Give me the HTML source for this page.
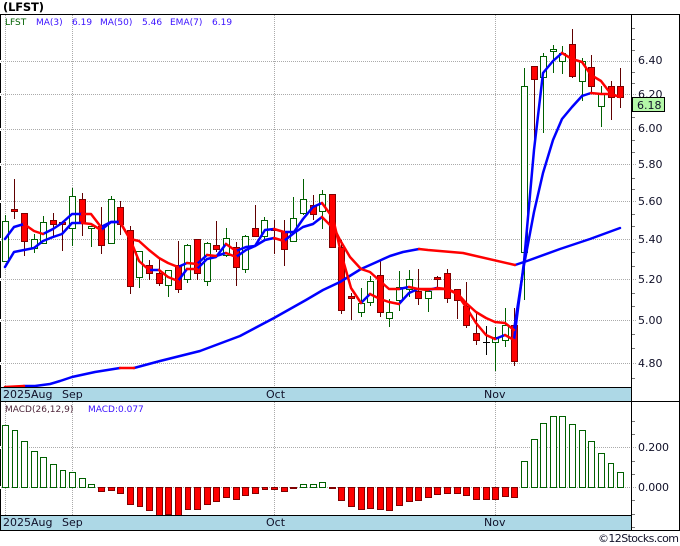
<!DOCTYPE html>
<html><head><meta charset="utf-8"><style>
html,body{margin:0;padding:0;background:#fff;width:680px;height:546px;overflow:hidden}
svg{display:block}
text{font-family:"DejaVu Sans",sans-serif;font-size:11px;fill:#101028}
.l{font-size:9px;fill:#3a10ff}
</style></head><body>
<svg width="680" height="546" viewBox="0 0 680 546" xmlns="http://www.w3.org/2000/svg">
<rect width="680" height="546" fill="#fff"/>
<g shape-rendering="crispEdges" fill="none">
<path stroke="#aaa" stroke-dasharray="1 1" d="M1 61.5H637M1 94.5H637M1 129.5H637M1 164.5H637M1 201.5H637M1 239.5H637M1 279.5H637M1 320.5H637M1 363.5H637M1 447.5H637M1 487.5H637M5.5 15V387M72.5 15V387M274.5 15V387M495.5 15V387M5.5 402V515M72.5 402V515M274.5 402V515M495.5 402V515"/>
<path stroke="#777" d="M632 28.5h3M632 39.5h3M632 50.5h3M632 72.5h3M632 83.5h3M632 105.5h3M632 117.5h3M632 140.5h3M632 152.5h3M632 178.5h3M632 189.5h3M632 214.5h3M632 226.5h3M632 252.5h3M632 266.5h3M632 293.5h3M632 306.5h3M632 334.5h3M632 348.5h3M632 378.5h3M632 421.5h3M632 434.5h3M632 461.5h3M632 474.5h3M632 500.5h3M632 514.5h3M632 527.5h3"/>
<!-- wicks -->
<path stroke="#006000" d="M5.5 215V261M34.5 234V253M43.5 216V244M72.5 188V246M91.5 226V247M111.5 196V243M139.5 251V288M168.5 270V297M187.5 244V283M207.5 242V286M226.5 228V257M245.5 235V273M264.5 217V239M293.5 197V241M303.5 179V215M322.5 190V229M361.5 288V317M370.5 276V306M389.5 299V327M399.5 271V311M409.5 270V297M428.5 288V312M495.5 327V371M505.5 308V347M524.5 68V300M543.5 53V133M553.5 45V73M562.5 46V74M582.5 58V101M601.5 86V127"/>
<path stroke="#600000" d="M14.5 179V219M24.5 213V256M53.5 213V236M62.5 221V251M82.5 193V236M101.5 207V254M120.5 201V235M130.5 226V294M149.5 260V280M159.5 259V286M178.5 241V293M197.5 239V280M216.5 221V252M236.5 242V286M255.5 205V237M274.5 220V254M284.5 220V266M313.5 195V220M332.5 194V247M341.5 240V314M351.5 293V320M380.5 259V317M418.5 269V305M437.5 276V288M447.5 269V303M457.5 289V319M466.5 282V328M476.5 313V345M514.5 308V366M534.5 66V152M572.5 29V78M591.5 55V93M611.5 81V120M620.5 68V108"/>
<path stroke="#000" d="M486.5 326V355M483 342.5h7"/>
<!-- green bodies -->
<g fill="#fff" stroke="#006000">
<rect x="2.5" y="221.5" width="6" height="40"/><rect x="31.5" y="239.5" width="6" height="9"/><rect x="40.5" y="222.5" width="6" height="21"/><rect x="69.5" y="196.5" width="6" height="32"/><rect x="88.5" y="226.5" width="6" height="2"/><rect x="108.5" y="199.5" width="6" height="44"/><rect x="136.5" y="251.5" width="6" height="26"/><rect x="165.5" y="270.5" width="6" height="15"/><rect x="184.5" y="245.5" width="6" height="34"/><rect x="204.5" y="243.5" width="6" height="38"/><rect x="223.5" y="238.5" width="6" height="17"/><rect x="242.5" y="236.5" width="6" height="33"/><rect x="261.5" y="220.5" width="6" height="16"/><rect x="290.5" y="218.5" width="6" height="23"/><rect x="300.5" y="199.5" width="6" height="14"/><rect x="319.5" y="194.5" width="6" height="17"/><rect x="358.5" y="303.5" width="6" height="9"/><rect x="367.5" y="281.5" width="6" height="21"/><rect x="386.5" y="312.5" width="6" height="6"/><rect x="396.5" y="287.5" width="6" height="13"/><rect x="406.5" y="279.5" width="6" height="10"/><rect x="425.5" y="291.5" width="6" height="7"/><rect x="492.5" y="337.5" width="6" height="5"/><rect x="502.5" y="325.5" width="6" height="15"/><rect x="521.5" y="86.5" width="6" height="166"/><rect x="540.5" y="56.5" width="6" height="21"/><rect x="550.5" y="49.5" width="6" height="2"/><rect x="559.5" y="53.5" width="6" height="8"/><rect x="579.5" y="61.5" width="6" height="20"/><rect x="598.5" y="93.5" width="6" height="13"/>
</g>
<!-- red bodies -->
<g fill="#f00" stroke="#800000">
<rect x="11.5" y="209.5" width="6" height="2"/><rect x="21.5" y="213.5" width="6" height="28"/><rect x="50.5" y="220.5" width="6" height="4"/><rect x="59.5" y="222.5" width="6" height="2"/><rect x="79.5" y="199.5" width="6" height="23"/><rect x="98.5" y="226.5" width="6" height="19"/><rect x="117.5" y="207.5" width="6" height="17"/><rect x="127.5" y="230.5" width="6" height="56"/><rect x="146.5" y="265.5" width="6" height="8"/><rect x="156.5" y="273.5" width="6" height="10"/><rect x="175.5" y="265.5" width="6" height="24"/><rect x="194.5" y="239.5" width="6" height="34"/><rect x="213.5" y="245.5" width="6" height="4"/><rect x="233.5" y="247.5" width="6" height="20"/><rect x="252.5" y="228.5" width="6" height="8"/><rect x="271.5" y="229.5" width="6" height="1"/><rect x="281.5" y="232.5" width="6" height="17"/><rect x="310.5" y="205.5" width="6" height="9"/><rect x="329.5" y="194.5" width="6" height="53"/><rect x="338.5" y="247.5" width="6" height="63"/><rect x="348.5" y="296.5" width="6" height="2"/><rect x="377.5" y="275.5" width="6" height="37"/><rect x="415.5" y="291.5" width="6" height="7"/><rect x="434.5" y="277.5" width="6" height="2"/><rect x="444.5" y="273.5" width="6" height="25"/><rect x="454.5" y="289.5" width="6" height="11"/><rect x="463.5" y="306.5" width="6" height="19"/><rect x="473.5" y="333.5" width="6" height="7"/><rect x="511.5" y="325.5" width="6" height="36"/><rect x="531.5" y="66.5" width="6" height="13"/><rect x="569.5" y="44.5" width="6" height="32"/><rect x="588.5" y="67.5" width="6" height="19"/><rect x="608.5" y="86.5" width="6" height="11"/><rect x="617.5" y="86.5" width="6" height="11"/>
</g>
<!-- MACD green -->
<g fill="#fff" stroke="#006000">
<rect x="2.5" y="425.5" width="6" height="62"/><rect x="12.5" y="430.5" width="5" height="57"/><rect x="21.5" y="441.5" width="6" height="46"/><rect x="31.5" y="451.5" width="6" height="36"/><rect x="40.5" y="457.5" width="6" height="30"/><rect x="50.5" y="464.5" width="6" height="23"/><rect x="60.5" y="470.5" width="5" height="17"/><rect x="69.5" y="472.5" width="6" height="15"/><rect x="79.5" y="478.5" width="6" height="9"/><rect x="88.5" y="484.5" width="6" height="3"/><rect x="300.5" y="484.5" width="6" height="3"/><rect x="310.5" y="484.5" width="6" height="3"/><rect x="319.5" y="482.5" width="6" height="5"/><rect x="521.5" y="461.5" width="6" height="26"/><rect x="531.5" y="439.5" width="6" height="48"/><rect x="540.5" y="423.5" width="6" height="64"/><rect x="550.5" y="416.5" width="6" height="71"/><rect x="559.5" y="416.5" width="6" height="71"/><rect x="569.5" y="424.5" width="6" height="63"/><rect x="579.5" y="430.5" width="6" height="57"/><rect x="588.5" y="441.5" width="6" height="46"/><rect x="598.5" y="453.5" width="6" height="34"/><rect x="608.5" y="463.5" width="5" height="24"/><rect x="617.5" y="472.5" width="6" height="15"/>
</g>
<!-- MACD red -->
<g fill="#f00" stroke="#800000">
<rect x="98.5" y="487.5" width="6" height="4"/><rect x="108.5" y="487.5" width="6" height="3"/><rect x="117.5" y="487.5" width="6" height="6"/><rect x="127.5" y="487.5" width="6" height="17"/><rect x="137.5" y="487.5" width="5" height="19"/><rect x="146.5" y="487.5" width="6" height="23"/><rect x="156.5" y="487.5" width="6" height="28"/><rect x="165.5" y="487.5" width="6" height="27"/><rect x="175.5" y="487.5" width="6" height="28"/><rect x="185.5" y="487.5" width="5" height="22"/><rect x="194.5" y="487.5" width="6" height="22"/><rect x="204.5" y="487.5" width="6" height="17"/><rect x="213.5" y="487.5" width="6" height="14"/><rect x="223.5" y="487.5" width="6" height="10"/><rect x="233.5" y="487.5" width="6" height="12"/><rect x="242.5" y="487.5" width="6" height="8"/><rect x="252.5" y="487.5" width="6" height="6"/><rect x="262.5" y="487.5" width="5" height="2"/><rect x="271.5" y="487.5" width="6" height="2"/><rect x="281.5" y="487.5" width="6" height="4"/><rect x="290.5" y="487.5" width="6" height="1"/><rect x="329.5" y="487.5" width="6" height="1"/><rect x="338.5" y="487.5" width="6" height="13"/><rect x="348.5" y="487.5" width="6" height="19"/><rect x="358.5" y="487.5" width="6" height="22"/><rect x="367.5" y="487.5" width="6" height="21"/><rect x="377.5" y="487.5" width="6" height="22"/><rect x="386.5" y="487.5" width="6" height="23"/><rect x="396.5" y="487.5" width="6" height="18"/><rect x="406.5" y="487.5" width="6" height="14"/><rect x="415.5" y="487.5" width="6" height="13"/><rect x="425.5" y="487.5" width="6" height="10"/><rect x="434.5" y="487.5" width="6" height="7"/><rect x="444.5" y="487.5" width="6" height="6"/><rect x="454.5" y="487.5" width="6" height="6"/><rect x="463.5" y="487.5" width="6" height="8"/><rect x="473.5" y="487.5" width="6" height="12"/><rect x="483.5" y="487.5" width="6" height="12"/><rect x="492.5" y="487.5" width="6" height="12"/><rect x="502.5" y="487.5" width="6" height="9"/><rect x="511.5" y="487.5" width="6" height="10"/>
</g>
</g>
<!-- lines -->
<g fill="none" stroke-width="2.5" stroke-linejoin="round" stroke-linecap="round">
<g stroke="#0000ff">
<polyline points="24,386 35,386 50,384 60,381 72,377 95,372 120,368"/>
<polyline points="134,368 160,361 200,351 240,336 274,318 306,300 323,290 340,282 361,269 370,265 390,256 403,252 419,249"/>
<polyline points="515,265 527,261 560,249 590,239 620,228"/>
<polyline points="5,239 14,227 24,224"/><polyline points="43,234 53,229 62,223 72,214 82,214"/><polyline points="101,227 111,222 120,222"/><polyline points="149,270 159,270"/><polyline points="178,281 187,269"/><polyline points="197,269 207,259 216,257 226,244"/><polyline points="236,251 246,247 255,246 265,230 274,229"/><polyline points="284,232 294,232 303,219 313,207 322,203"/><polyline points="361,303 370,294"/><polyline points="399,304 409,293 418,289"/><polyline points="495,339 505,335"/><polyline points="514,340 524,262 534,150 543,73 553,61 562,53"/>
<polyline points="5,267 14,252 24,250 34,248 43,241 53,237 62,234 72,223 82,223"/><polyline points="101,230 111,222 120,222"/><polyline points="178,267 187,263"/><polyline points="197,264 207,255"/><polyline points="216,256 226,253"/><polyline points="236,257 246,250 255,246 265,240 274,238"/><polyline points="284,241 294,233 303,227 313,224 322,217"/><polyline points="399,289 409,287"/><polyline points="428,290 437,288"/><polyline points="514,330 524,265 534,212 543,173 553,140 562,119 572,107 582,96 591,93"/>
</g>
<g stroke="#ff0000">
<polyline points="5,387 24,386"/><polyline points="120,368 134,368"/><polyline points="419,249 428,250 463,253 515,265"/>
<polyline points="24,224 34,231 43,234"/><polyline points="82,214 91,214 101,227"/><polyline points="120,222 130,239 139,261 149,270"/><polyline points="159,270 168,277 178,281"/><polyline points="187,269 197,269"/><polyline points="226,244 236,251"/><polyline points="274,229 284,232"/><polyline points="322,203 333,218 341,253 351,288 361,303"/><polyline points="370,294 380,299 389,302 399,304"/><polyline points="418,289 428,289 437,289 447,289 457,294 466,307 476,323 486,335 495,339"/><polyline points="505,335 514,340"/><polyline points="562,53 572,59 582,62 591,75 601,81 611,94 620,97"/>
<polyline points="82,223 91,224 101,230"/><polyline points="120,222 130,239 139,241 149,250 159,258 168,263 178,267"/><polyline points="187,263 197,264"/><polyline points="207,255 216,256"/><polyline points="226,253 236,257"/><polyline points="274,238 284,241"/><polyline points="322,217 335,230 340,240 350,257 361,269 370,272 380,281 389,289 399,289"/><polyline points="409,287 418,289 428,290"/><polyline points="437,288 447,289 457,293 466,303 476,312 486,318 495,322 505,323 514,330"/><polyline points="591,93 601,94 611,94 620,97"/>
</g>
</g>
<!-- bands and frame -->
<g shape-rendering="crispEdges">
<rect x="1" y="388" width="630" height="13" fill="#add8e6"/>
<rect x="1" y="516" width="630" height="14" fill="#add8e6"/>
<path fill="none" stroke="#000" d="M0 14.5H680M679.5 14V531M631.5 14V531M0 530.5H680M0 387.5H632M0 401.5H680M0 515.5H632M0.5 14V60M0.5 63V93M0.5 96V128M0.5 131V163M0.5 166V200M0.5 203V238M0.5 241V278M0.5 281V319M0.5 322V362M0.5 365V446M0.5 449V486M0.5 489V531"/>
</g>
<text x="3" y="11" style="font-weight:bold;font-size:11.5px;fill:#000" textLength="41">(LFST)</text>
<text class="l" x="5" y="25" style="fill:#006000">LFST</text>
<text class="l" x="36" y="25">MA(3)</text><text class="l" x="72" y="25">6.19</text>
<text class="l" x="100" y="25">MA(50)</text><text class="l" x="142" y="25">5.46</text>
<text class="l" x="170" y="25">EMA(7)</text><text class="l" x="212" y="25">6.19</text>
<text x="638" y="64">6.40</text><text x="638" y="98">6.20</text><text x="638" y="132">6.00</text><text x="638" y="168">5.80</text><text x="638" y="205">5.60</text><text x="638" y="243">5.40</text><text x="638" y="283">5.20</text><text x="638" y="324">5.00</text><text x="638" y="367">4.80</text>
<rect x="632.5" y="97.5" width="32" height="14" fill="#b4f8a8" stroke="#000" shape-rendering="crispEdges"/>
<text x="637" y="109">6.18</text>
<text x="3" y="398">2025Aug</text><text x="62" y="398">Sep</text><text x="266" y="398">Oct</text><text x="484" y="398">Nov</text>
<text class="l" x="5" y="412" style="fill:#50283c">MACD(26,12,9)</text><text class="l" x="88" y="412">MACD:0.077</text>
<text x="638" y="451" textLength="31">0.200</text><text x="638" y="491" textLength="31">0.000</text>
<text x="3" y="526">2025Aug</text><text x="62" y="526">Sep</text><text x="266" y="526">Oct</text><text x="484" y="526">Nov</text>
<text x="598" y="542" textLength="81">©12Stocks.com</text>
</svg>
</body></html>
